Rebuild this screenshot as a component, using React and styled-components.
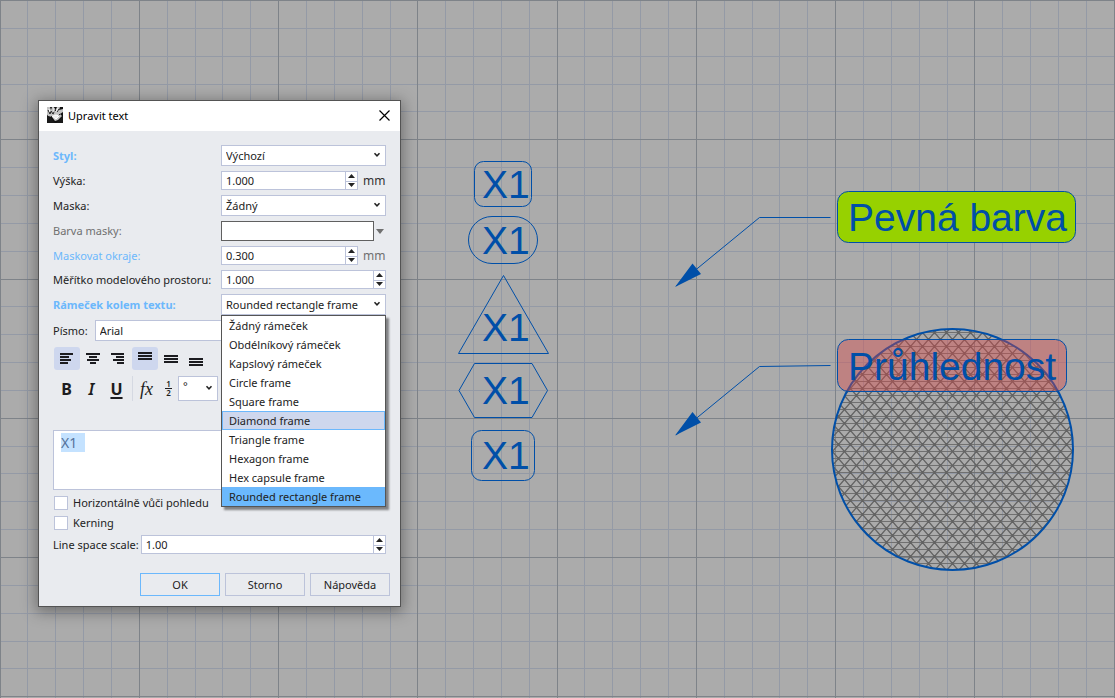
import React, { useEffect, useRef } from "react";
import styled, { createGlobalStyle } from "styled-components";

const Global = createGlobalStyle`
  * { box-sizing: border-box; }
  body { margin: 0; font-family: "Noto Sans", "Open Sans", sans-serif; font-size: 11px; color: #222; }
  button, input, select, textarea { font: inherit; color: inherit; }
`;

const line = "#bcc3da";
const sky = "#6cb8fc";
const ink = "#004fa8";

const Viewport = styled.main`
  position: relative;
  min-height: 100vh;
  overflow: hidden;
  background: #ababab;
`;

const Drawing = styled.svg`
  position: absolute;
  inset: 0;
  width: 100%;
  height: 100%;
  font-family: "Liberation Sans", Arial, sans-serif;
  font-size: 39px;
`;

const Dialog = styled.section`
  position: absolute;
  left: 38px;
  top: 100px;
  width: 363px;
  background: #e9ebef;
  border: 1px solid #535353;
  box-shadow: 0 3px 14px 2px rgba(0, 0, 0, 0.35);
`;

const TitleBar = styled.header`
  display: flex;
  align-items: center;
  gap: 5px;
  height: 30px;
  padding: 0 8px 2px;
  background: #fff;
  color: #000;
`;

const Title = styled.h1`
  flex: 1;
  margin: 0;
  font-size: 11px;
  font-weight: 400;
`;

const CloseButton = styled.button`
  display: flex;
  padding: 2px;
  border: 0;
  background: none;
`;

const Form = styled.form`
  display: flex;
  flex-direction: column;
  padding: 14px 14px 0;
`;

const Fields = styled.div`
  display: flex;
  flex-direction: column;
  gap: 5px;
`;

const Row = styled.div`
  display: grid;
  grid-template-columns: 168px 1fr;
  align-items: center;
`;

const InlineRow = styled.div`
  display: flex;
  align-items: center;
  gap: ${(p) => p.$gap}px;
`;

const Label = styled.label`
  line-height: 18px;
  white-space: nowrap;
  font-weight: ${(p) => (p.$strong ? 700 : 400)};
  color: ${(p) => p.$color || "#222"};
`;

const Control = styled.div`
  position: relative;
  display: flex;
  align-items: center;
  flex: 1;
  gap: 5px;
`;

const SelectBox = styled.div`
  position: relative;
  display: flex;
  width: ${(p) => p.$width || "auto"};
  flex: ${(p) => (p.$width ? "none" : 1)};
`;

const Select = styled.select`
  appearance: none;
  width: 100%;
  height: ${(p) => (p.$tall ? 25 : 21)}px;
  padding: ${(p) => (p.$tall ? "0 4px 6px" : "0 4px")};
  border: 1px solid ${line};
  border-radius: 0;
  background: #fff;
`;

const Chevron = styled.svg`
  position: absolute;
  right: 5px;
  top: 50%;
  margin-top: -4px;
  pointer-events: none;
`;

const TextInput = styled.input`
  flex: 1;
  width: 0;
  height: 21px;
  padding: 0 4px;
  border: 1px solid ${line};
  background: #fff;
`;

const SpinBox = styled.div`
  display: flex;
  flex: 1;
  height: 19px;
  border: 1px solid ${line};
  background: #fff;
`;

const SpinInput = styled.input`
  flex: 1;
  width: 0;
  padding: 0 4px;
  border: 0;
  background: none;
`;

const SpinButtons = styled.div`
  display: grid;
  grid-template-rows: 1fr 1fr;
  width: 12px;
  border-left: 1px solid ${line};
`;

const SpinButton = styled.button`
  display: flex;
  align-items: center;
  justify-content: center;
  padding: 0;
  border: 0;
  background: none;
  & + & { border-top: 1px solid ${line}; }
`;

const Unit = styled.span`
  width: 23px;
  font-size: 12px;
  line-height: 18px;
  color: ${(p) => (p.$muted ? "#707070" : "#333")};
`;

const Swatch = styled.button`
  flex: 1;
  height: 20px;
  border: 1px solid #606060;
  background: #fff;
`;

const SwatchArrow = styled.button`
  display: flex;
  width: 12px;
  margin-left: -5px;
  padding: 0 2px;
  border: 0;
  background: none;
`;

const Options = styled.ul`
  position: absolute;
  z-index: 2;
  top: 100%;
  left: 0;
  right: 0;
  margin: 0;
  padding: 0;
  list-style: none;
  border: 1px solid #555;
  background: #fff;
  box-shadow: 3px 3px 2px rgba(0, 0, 0, 0.45);
`;

const Option = styled.li`
  height: 19px;
  padding: 0 6px;
  line-height: 18px;
  white-space: nowrap;
  border: 1px solid ${(p) => (p.$state ? sky : "transparent")};
  background: ${(p) =>
    p.$state === "selected" ? "#6bb9fd" : p.$state === "hover" ? "#ced7ed" : "transparent"};
`;

const Toolbar = styled.div`
  display: flex;
  align-items: center;
  margin-top: 6px;
  padding-left: 1px;
`;

const Tool = styled.button`
  display: flex;
  align-items: center;
  justify-content: center;
  width: ${(p) => p.$width || 25}px;
  height: ${(p) => p.$height || 23}px;
  padding: 0;
  border: 0;
  border-radius: 3px;
  background: ${(p) => (p.$active ? "#ced7ee" : "none")};
  color: #1c1c20;
`;

const ToolGroup = styled.div`
  display: flex;
  margin-right: 2px;
`;

const Letter = styled.span`
  font-size: 16px;
  line-height: 20px;
  font-weight: ${(p) => (p.$medium ? 600 : 700)};
  font-style: ${(p) => (p.$italic ? "italic" : "normal")};
  text-decoration: ${(p) => (p.$underline ? "underline 2px" : "none")};
  text-underline-offset: 2px;
`;

const Formula = styled.span`
  font-family: "Liberation Serif", serif;
  font-size: 18px;
  line-height: 20px;
  font-style: italic;
`;

const Fraction = styled.span`
  display: flex;
  flex-direction: column;
  width: 7px;
  font-size: 8px;
  line-height: 8px;
  font-weight: 600;
  text-align: center;
`;

const Numerator = styled.span`
  border-bottom: 1px solid #1c1c20;
`;

const Divider = styled.span`
  width: 1px;
  height: 25px;
  margin: 0 1px 0 3px;
  background: #d5d9e2;
`;

const Editor = styled.textarea`
  height: 60px;
  margin: 29px 0 6px;
  padding: 3px 7px;
  border: 1px solid ${line};
  outline: none;
  resize: none;
  background: #fff;
  color: #54739b;
  font-size: 14px;
  line-height: 18px;
  &::selection { background: #c4e2ff; color: #54739b; }
`;

const Check = styled.input`
  appearance: none;
  width: 14px;
  height: 14px;
  margin: 0 0 0 1px;
  border: 1px solid ${line};
  background: #fff;
`;

const Checks = styled.div`
  display: flex;
  flex-direction: column;
  gap: 6px;
  margin-bottom: 5px;
`;

const CheckRow = styled.div`
  display: flex;
  align-items: center;
  gap: 5px;
  height: 14px;
`;

const Footer = styled.footer`
  display: flex;
  justify-content: flex-end;
  gap: 5px;
  padding: 19px 10px 10px;
`;

const Button = styled.button`
  width: 80px;
  height: 23px;
  padding: 0;
  border: 1px solid ${(p) => (p.$primary ? sky : line)};
  background: #e9ebef;
`;

function Caret() {
  return (
    <Chevron width="8" height="6" viewBox="0 0 8 6" aria-hidden="true">
      <path d="M1.5 1.2 4 3.8 6.5 1.2" fill="none" stroke="#222" strokeWidth="1.5" />
    </Chevron>
  );
}

function Spin({ id, value }) {
  return (
    <SpinBox>
      <SpinInput id={id} defaultValue={value} />
      <SpinButtons>
        <SpinButton type="button" aria-label="+">
          <svg width="7" height="4"><path d="M0 4 3.5 0 7 4z" fill="#222" /></svg>
        </SpinButton>
        <SpinButton type="button" aria-label="−">
          <svg width="7" height="4"><path d="M0 0h7L3.5 4z" fill="#222" /></svg>
        </SpinButton>
      </SpinButtons>
    </SpinBox>
  );
}

function Bars({ rows }) {
  return (
    <svg width="14" height="18" aria-hidden="true">
      {rows.map(([x, y, w]) => (
        <rect key={y} x={x} y={y} width={w} height="2" fill="#1c1c20" />
      ))}
    </svg>
  );
}

const alignments = [
  ["Vlevo", true, [[0, 3, 13], [0, 6, 9], [0, 9, 11], [0, 12, 8]]],
  ["Na střed", false, [[0, 3, 14], [3, 6, 8], [1, 9, 12], [4, 12, 6]]],
  ["Vpravo", false, [[0, 3, 13], [5, 6, 8], [2, 9, 11], [6, 12, 7]]],
];
const verticals = [
  ["Nahoře", true, [[0, 2, 14], [0, 5, 14], [0, 8, 14]]],
  ["Uprostřed", false, [[0, 5, 14], [0, 8, 14], [0, 11, 14]]],
  ["Dole", false, [[0, 8, 14], [0, 11, 14], [0, 14, 14]]],
];

const frames = [
  "Žádný rámeček",
  "Obdélníkový rámeček",
  "Kapslový rámeček",
  "Circle frame",
  "Square frame",
  "Diamond frame",
  "Triangle frame",
  "Hexagon frame",
  "Hex capsule frame",
  "Rounded rectangle frame",
];

function RhinoLogo() {
  return (
    <svg width="16" height="16" viewBox="0 0 16 16" aria-hidden="true">
      <rect width="16" height="16" fill="#111" />
      <path d="M0 0h3l1 3 1-3h2l1 4 2-4h3l-1 3 4-1v3l-3 2 2 2-4 4-3 1-3-4-4-1-2-3z" fill="#c4c4c4" />
      <path d="M1 3l2 4 1-3 2 3 2-4 2 2 2-3M4 10l3-2 2 3 4-4" fill="none" stroke="#222" strokeWidth="1" />
      <path d="M2 2l1 3M7 1v4M11 1l-2 4M5 9l4-1 3 1-3 3z" fill="#eee" stroke="#fff" strokeWidth="1" />
      <path d="M0 9l4 2 4 5H0zM16 9v7H9z" fill="#1a1a1a" />
    </svg>
  );
}

const STEP = 27.85;

function Grid() {
  const indices = Array.from({ length: 100 }, (_, k) => k);
  const sorted = [...indices.filter((k) => k % 5), ...indices.filter((k) => k % 5 === 0)];
  return (
    <g>
      {sorted.map((k) => {
        const fill = k % 5 ? "#949aa6" : "#7e8389";
        return (
          <React.Fragment key={k}>
            <rect x={Math.floor(k * STEP + 0.1)} y="0" width="1" height="100%" fill={fill} />
            <rect x="0" y={Math.floor(k * STEP + 0.5)} width="100%" height="1" fill={fill} />
          </React.Fragment>
        );
      })}
    </g>
  );
}

function Hatch({ cx, cy, r }) {
  const row = 7;
  const side = 12;
  const rows = Math.ceil((2 * r) / row) + 1;
  const rise = rows * row;
  const run = (rows * side) / 2;
  const top = cy - r - 3;
  let flat = "";
  let slanted = "";
  for (let k = 0; k < rows; k++) flat += `M${cx - r} ${top + k * row}h${2 * r}`;
  const count = Math.ceil((r + run) / side);
  for (let k = -count; k <= count; k++) {
    const x = cx + k * side;
    slanted += `M${x} ${top}l${run} ${rise}`;
    slanted += `M${x} ${top}l${-run} ${rise}`;
  }
  return (
    <g clipPath="url(#disc)" fill="none">
      <path d={flat} stroke="#707070" />
      <path d={slanted} stroke="#626262" strokeWidth="1.3" />
    </g>
  );
}

function Scene() {
  return (
    <Drawing aria-label="Výkres">
      <defs>
        <clipPath id="disc"><circle cx="952.5" cy="449.5" r="120.5" /></clipPath>
      </defs>
      <Grid />
      <Hatch cx={952.5} cy={449.5} r={121} />
      <circle cx="952.5" cy="449.5" r="120.5" fill="none" stroke={ink} strokeWidth="2" />
      <g fill="none" stroke={ink}>
        <rect x="474.5" y="161.5" width="57" height="45" rx="9" />
        <rect x="468.5" y="216.5" width="69" height="47" rx="23.5" />
        <path d="M503.5 275.5 548.5 353.5H458.5z" />
        <path d="M474.5 363.5h57.5l15.5 27-15.5 27h-57.5l-15.5-27z" />
        <rect x="471.5" y="430.5" width="63" height="50" rx="10" />
        <path d="M676 286 759.5 217.5H830.5M676 435 759.5 366.5 830.5 365.5" />
        <rect x="837.5" y="191.5" width="238" height="51" rx="11" fill="#97d100" />
        <rect x="837.5" y="339.5" width="229" height="52" rx="11" fill="#dc4646" fillOpacity="0.4" />
      </g>
      <path d="M675 287 692.5 263.5 701 274zM675 435.5 692.5 412 701 422.5z" fill={ink} />
      <g fill={ink}>
        {[198, 254, 341, 404, 469].map((y) => (
          <text key={y} x="482" y={y}>X1</text>
        ))}
        <text x="848" y="231">Pevná barva</text>
        <text x="848" y="380">Průhlednost</text>
      </g>
    </Drawing>
  );
}

export default function App() {
  const editor = useRef(null);
  useEffect(() => {
    editor.current.focus();
    editor.current.select();
  }, []);

  return (
    <Viewport>
      <Global />
      <Scene />
      <Dialog role="dialog" aria-labelledby="title">
        <TitleBar>
          <RhinoLogo />
          <Title id="title">Upravit text</Title>
          <CloseButton type="button" aria-label="Zavřít">
            <svg width="11" height="11"><path d="M.5.5l10 10M10.5.5l-10 10" stroke="#000" strokeWidth="1.2" /></svg>
          </CloseButton>
        </TitleBar>
        <Form>
          <Fields>
            <Row>
              <Label htmlFor="style" $strong $color={sky}>Styl:</Label>
              <SelectBox>
                <Select id="style"><option>Výchozí</option></Select>
                <Caret />
              </SelectBox>
            </Row>
            <Row>
              <Label htmlFor="height">Výška:</Label>
              <Control><Spin id="height" value="1.000" /><Unit>mm</Unit></Control>
            </Row>
            <Row>
              <Label htmlFor="mask">Maska:</Label>
              <SelectBox>
                <Select id="mask"><option>Žádný</option></Select>
                <Caret />
              </SelectBox>
            </Row>
            <Row>
              <Label htmlFor="mask-color" $color="#707070">Barva masky:</Label>
              <Control>
                <Swatch type="button" id="mask-color" />
                <SwatchArrow type="button" aria-label="Vybrat barvu">
                  <svg width="8" height="5"><path d="M0 0h8L4 5z" fill="#707070" /></svg>
                </SwatchArrow>
              </Control>
            </Row>
            <Row>
              <Label htmlFor="margin" $color={sky}>Maskovat okraje:</Label>
              <Control><Spin id="margin" value="0.300" /><Unit $muted>mm</Unit></Control>
            </Row>
            <Row>
              <Label htmlFor="scale">Měřítko modelového prostoru:</Label>
              <Control><Spin id="scale" value="1.000" /></Control>
            </Row>
            <Row>
              <Label htmlFor="frame" $strong $color={sky}>Rámeček kolem textu:</Label>
              <SelectBox>
                <Select id="frame"><option>Rounded rectangle frame</option></Select>
                <Caret />
                <Options role="listbox" aria-label="Rámeček kolem textu">
                  {frames.map((name, i) => (
                    <Option
                      key={name}
                      role="option"
                      aria-selected={i === 9}
                      $state={i === 9 ? "selected" : i === 5 ? "hover" : ""}
                    >
                      {name}
                    </Option>
                  ))}
                </Options>
              </SelectBox>
            </Row>
            <InlineRow $gap={7}>
              <Label htmlFor="font">Písmo:</Label>
              <TextInput id="font" defaultValue="Arial" />
            </InlineRow>
          </Fields>

          <Toolbar>
            <ToolGroup>
              {alignments.map(([name, active, rows]) => (
                <Tool type="button" key={name} aria-label={name} $active={active} $width={active ? 26 : 25}>
                  <Bars rows={rows} />
                </Tool>
              ))}
            </ToolGroup>
            <ToolGroup>
              {verticals.map(([name, active, rows]) => (
                <Tool type="button" key={name} aria-label={name} $active={active} $width={active ? 26 : 25}>
                  <Bars rows={rows} />
                </Tool>
              ))}
            </ToolGroup>
          </Toolbar>
          <Toolbar>
            <Tool type="button" $height={25}><Letter>B</Letter></Tool>
            <Tool type="button" $height={25}><Letter $medium $italic>I</Letter></Tool>
            <Tool type="button" $height={25}><Letter $underline>U</Letter></Tool>
            <Divider />
            <Tool type="button" $height={25}><Formula>fx</Formula></Tool>
            <Tool type="button" $height={25} $width={19}>
              <Fraction><Numerator>1</Numerator><span>2</span></Fraction>
            </Tool>
            <SelectBox $width="40px">
              <Select $tall aria-label="Symbol"><option>°</option></Select>
              <Caret />
            </SelectBox>
          </Toolbar>

          <Editor ref={editor} aria-label="Text" defaultValue={"X1  "} spellCheck={false} />
          <Checks>
            <CheckRow>
              <Check type="checkbox" id="horizontal" />
              <Label htmlFor="horizontal">Horizontálně vůči pohledu</Label>
            </CheckRow>
            <CheckRow>
              <Check type="checkbox" id="kerning" />
              <Label htmlFor="kerning">Kerning</Label>
            </CheckRow>
          </Checks>
          <InlineRow $gap={2}>
            <Label htmlFor="line-space">Line space scale:</Label>
            <Spin id="line-space" value="1.00" />
          </InlineRow>
        </Form>
        <Footer>
          <Button type="button" $primary>OK</Button>
          <Button type="button">Storno</Button>
          <Button type="button">Nápověda</Button>
        </Footer>
      </Dialog>
    </Viewport>
  );
}
